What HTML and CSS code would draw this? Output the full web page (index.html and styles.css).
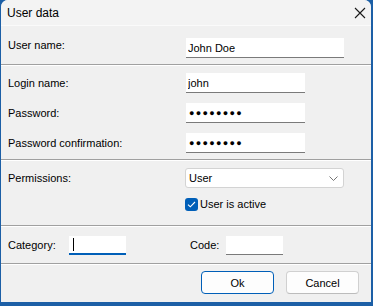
FILE: index.html
```html
<!DOCTYPE html>
<html lang="en">
<head>
  <meta charset="UTF-8">
  <title>User data</title>
  <link rel="stylesheet" href="styles.css">
</head>
<body>

  <div class="window">
    <div class="titlebar">
      <span class="title">User data</span>
      <svg class="close" width="12" height="12" viewBox="0 0 12 12">
        <path d="M1 1 L11 11 M11 1 L1 11" stroke="#1a1a1a" stroke-width="1.1" fill="none"/>
      </svg>
    </div>

    <div class="section first">
      <div class="row">
        <label class="label up" for="username">User name:</label>
        <input id="username" class="field wide" type="text" value="John Doe">
      </div>
    </div>

    <div class="section second">
      <div class="row">
        <label class="label" for="login">Login name:</label>
        <input id="login" class="field" type="text" value="john">
      </div>
      <div class="row">
        <label class="label" for="pass">Password:</label>
        <div id="pass" class="field dots">●●●●●●●●</div>
      </div>
      <div class="row">
        <label class="label" for="pass2">Password confirmation:</label>
        <div id="pass2" class="field dots">●●●●●●●●</div>
      </div>
    </div>

    <div class="section third">
      <div class="row">
        <span class="label">Permissions:</span>
        <div class="select">
          <span>User</span>
          <svg width="9" height="5" viewBox="0 0 9 5">
            <path d="M0.5 0.5 L4.5 4.5 L8.5 0.5" stroke="#666" stroke-width="0.9" fill="none"/>
          </svg>
        </div>
      </div>
      <div class="row check-row">
        <span class="label"></span>
        <span class="checkbox">
          <svg width="9" height="7" viewBox="0 0 9 7">
            <path d="M1 3.6 L3.3 5.8 L8 1" stroke="#fff" stroke-width="1.1" fill="none"/>
          </svg>
        </span>
        <span class="check-text">User is active</span>
      </div>
    </div>

    <div class="section fourth">
      <div class="row">
        <span class="short-label">Category:</span>
        <div class="field small focused"><span class="caret"></span></div>
        <span class="code-label">Code:</span>
        <div class="field small"></div>
      </div>
    </div>

    <div class="buttons">
      <button class="btn default">Ok</button>
      <button class="btn">Cancel</button>
    </div>
  </div>

</body>
</html>
```

FILE: styles.css
```css
body {
  margin: 0;
  background: #1c5fa6;
  font-family: 'Liberation Sans', Arial, sans-serif;
  font-size: 11px;
  color: #000;
}

.window {
  margin-left: 1px;
  width: 370px;
  height: 302px;
  background: #f0f0f0;
  border-radius: 7px 7px 0 0;
  overflow: hidden;
  display: flex;
  flex-direction: column;
}

.titlebar {
  height: 25px;
  border-bottom: 1px solid #fafafa;
  background: #f3f3f3;
  display: flex;
  align-items: center;
  justify-content: space-between;
  padding: 0 5px 0 6px;
}

.title {
  font-size: 12px;
}

.close {
  margin-top: 1px;
}

.section {
  padding-left: 7px;
  display: flex;
  flex-direction: column;
  border-bottom: 1px solid #a0a0a0;
  box-shadow: 0 1px 0 #fff;
  margin-bottom: 1px;
}

.first {
  padding-top: 12px;
  padding-bottom: 6px;
}

.second {
  padding-top: 7px;
  padding-bottom: 6px;
  gap: 10px;
}

.third {
  padding-top: 7px;
  padding-bottom: 14px;
  gap: 9px;
}

.fourth {
  padding-top: 8px;
  padding-bottom: 8px;
}

.row {
  display: flex;
  align-items: center;
  height: 20px;
}

.label {
  width: 178px;
  flex: none;
}

.up {
  padding-bottom: 6px;
}

.field {
  box-sizing: border-box;
  width: 119px;
  height: 20px;
  margin: 0;
  padding: 0 2px;
  border: none;
  border-bottom: 1px solid #7a7a7a;
  background: #fff;
  font-family: inherit;
  font-size: 11px;
  color: #000;
  outline: none;
}

.wide {
  width: 158px;
}

.dots {
  display: flex;
  align-items: center;
  font-size: 9px;
  letter-spacing: 1.3px;
  padding-left: 3px;
}

.select {
  box-sizing: border-box;
  width: 159px;
  height: 20px;
  margin-left: -1px;
  border: 1px solid #d3d3d3;
  border-radius: 3px;
  background: #fff;
  display: flex;
  align-items: center;
  justify-content: space-between;
  padding: 0 5px 0 3px;
}

.check-row {
  height: 14px;
}

.checkbox {
  width: 13px;
  height: 13px;
  margin-left: -1px;
  border-radius: 3px;
  background: #005fb8;
  display: flex;
  align-items: center;
  justify-content: center;
}

.check-text {
  margin-left: 2px;
}

.short-label {
  width: 61px;
  flex: none;
}

.code-label {
  width: 36px;
  margin-left: 64px;
  flex: none;
}

.small {
  width: 57px;
  height: 19px;
}

.focused {
  border-bottom: 2px solid #005fb8;
  display: flex;
  align-items: center;
}

.caret {
  width: 1px;
  height: 13px;
  margin-left: 2px;
  background: #000;
}

.buttons {
  display: flex;
  justify-content: flex-end;
  gap: 12px;
  padding: 6px 12px 0 0;
}

.btn {
  box-sizing: border-box;
  width: 73px;
  height: 23px;
  background: #fdfdfd;
  border: 1px solid #d0d0d0;
  border-bottom-color: #bcbcbc;
  border-radius: 4px;
  font-family: inherit;
  font-size: 11px;
  color: #000;
  padding: 0;
}

.default {
  border: 1px solid #005fb8;
}
```
